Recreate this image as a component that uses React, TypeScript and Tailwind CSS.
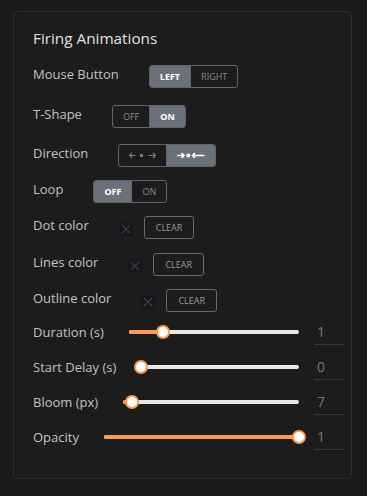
import { ReactNode } from 'react';

interface Segment {
  key: string;
  content: ReactNode;
  active?: boolean;
}

const SegmentGroup = ({ segments }: { segments: Segment[] }) => (
  <div className="flex h-[23px] rounded-[3px] border border-[#5f646c] overflow-hidden">
    {segments.map((seg, i) => (
      <div
        key={seg.key}
        className={`flex items-center justify-center px-[10px] text-[9px] leading-none ${
          i > 0 ? 'border-l border-[#5f646c]' : ''
        } ${seg.active ? 'bg-[#6b717a] text-white font-bold' : 'text-[#8a8a8a]'}`}
      >
        {seg.content}
      </div>
    ))}
  </div>
);

const ArrowsOut = () => (
  <svg width="27" height="7" viewBox="0 0 27 7" fill="none" stroke="#7c7c7c" strokeWidth="1.2">
    <path d="M0.5 3.5H6.5M3 1L0.5 3.5L3 6" />
    <rect x="11" y="2" width="3" height="3" fill="#7c7c7c" stroke="none" />
    <path d="M19.5 3.5H26.5M24 1L26.5 3.5L24 6" />
  </svg>
);

const ArrowsIn = () => (
  <svg width="28" height="7" viewBox="0 0 28 7" fill="none" stroke="#ffffff" strokeWidth="1.7">
    <path d="M0 3.5H7M4.5 1L7 3.5L4.5 6" />
    <rect x="9.5" y="1.8" width="3.5" height="3.5" fill="#ffffff" stroke="none" />
    <path d="M15.5 3.5H27.5M18 1L15.5 3.5L18 6" />
  </svg>
);

const Label = ({ children, gap = 'mr-[30px]' }: { children: ReactNode; gap?: string }) => (
  <span className={`text-[13px] leading-[18px] text-[#c2c2c2] ${gap}`}>{children}</span>
);

const ColorRow = ({ label, className }: { label: string; className: string }) => (
  <div className={`flex items-start ${className}`}>
    <Label>{label}</Label>
    <div className="flex items-center h-[23px]">
      <div className="w-[14px] h-[14px] bg-[#17171c] flex items-center justify-center mt-[2px]">
        <svg width="14" height="14" viewBox="0 0 14 14" stroke="#3b3b4e" strokeWidth="1.2">
          <path d="M3 3L11 11M11 3L3 11" />
        </svg>
      </div>
      <button className="ml-[11px] h-[23px] px-[11px] rounded-[3px] border border-[#666a70] text-[9px] leading-none text-[#9a9a9a]">
        CLEAR
      </button>
    </div>
  </div>
);

const SliderRow = ({ label, pct, value }: { label: string; pct: number; value: string }) => (
  <div className="flex items-center h-[27px]">
    <Label gap="mr-[25px]">{label}</Label>
    <div className="relative flex-1 h-[4px] rounded-full bg-[#e8e8e8]">
      <div className="absolute left-0 top-0 h-full rounded-full bg-[#fb9a4c]" style={{ width: `${pct}%` }} />
      <div
        className="absolute top-1/2 w-[14px] h-[14px] -translate-y-1/2 -translate-x-1/2 rounded-full bg-white border-2 border-[#fb9a4c]"
        style={{ left: `${pct}%` }}
      />
    </div>
    <div className="ml-[15px] w-[30px] h-[27px] border-b border-[#383838] pl-[3px] flex items-center text-[14px] text-[#777777]">
      {value}
    </div>
  </div>
);

export default function App() {
  return (
    <div className="min-h-screen bg-[#1a1a1a] pt-[11px] pl-[13px] font-['Open_Sans',sans-serif]">
      <div className="w-[339px] rounded-[4px] border border-[#2d2d2d] bg-[#1c1c1c] pt-[16px] pl-[19px] pr-[7px] pb-[28px]">
        <h2 className="text-[15.3px] leading-[20px] text-[#e2e2e2]">Firing Animations</h2>

        <div className="flex items-start mt-[17px]">
          <Label>Mouse Button</Label>
          <SegmentGroup
            segments={[
              { key: 'l', content: 'LEFT', active: true },
              { key: 'r', content: 'RIGHT' },
            ]}
          />
        </div>

        <div className="flex items-start mt-[17px]">
          <Label>T-Shape</Label>
          <SegmentGroup
            segments={[
              { key: 'off', content: 'OFF' },
              { key: 'on', content: 'ON', active: true },
            ]}
          />
        </div>

        <div className="flex items-start mt-[16px]">
          <Label>Direction</Label>
          <SegmentGroup
            segments={[
              { key: 'out', content: <ArrowsOut /> },
              { key: 'in', content: <ArrowsIn />, active: true },
            ]}
          />
        </div>

        <div className="flex items-start mt-[13px]">
          <Label>Loop</Label>
          <SegmentGroup
            segments={[
              { key: 'off', content: 'OFF', active: true },
              { key: 'on', content: 'ON' },
            ]}
          />
        </div>

        <ColorRow label="Dot color" className="mt-[13px]" />
        <ColorRow label="Lines color" className="mt-[14px]" />
        <ColorRow label="Outline color" className="mt-[13px]" />

        <div className="flex flex-col gap-[8px] mt-[6px]">
          <SliderRow label="Duration (s)" pct={20} value="1" />
          <SliderRow label="Start Delay (s)" pct={0} value="0" />
          <SliderRow label="Bloom (px)" pct={5} value="7" />
          <SliderRow label="Opacity" pct={100} value="1" />
        </div>
      </div>
    </div>
  );
}
